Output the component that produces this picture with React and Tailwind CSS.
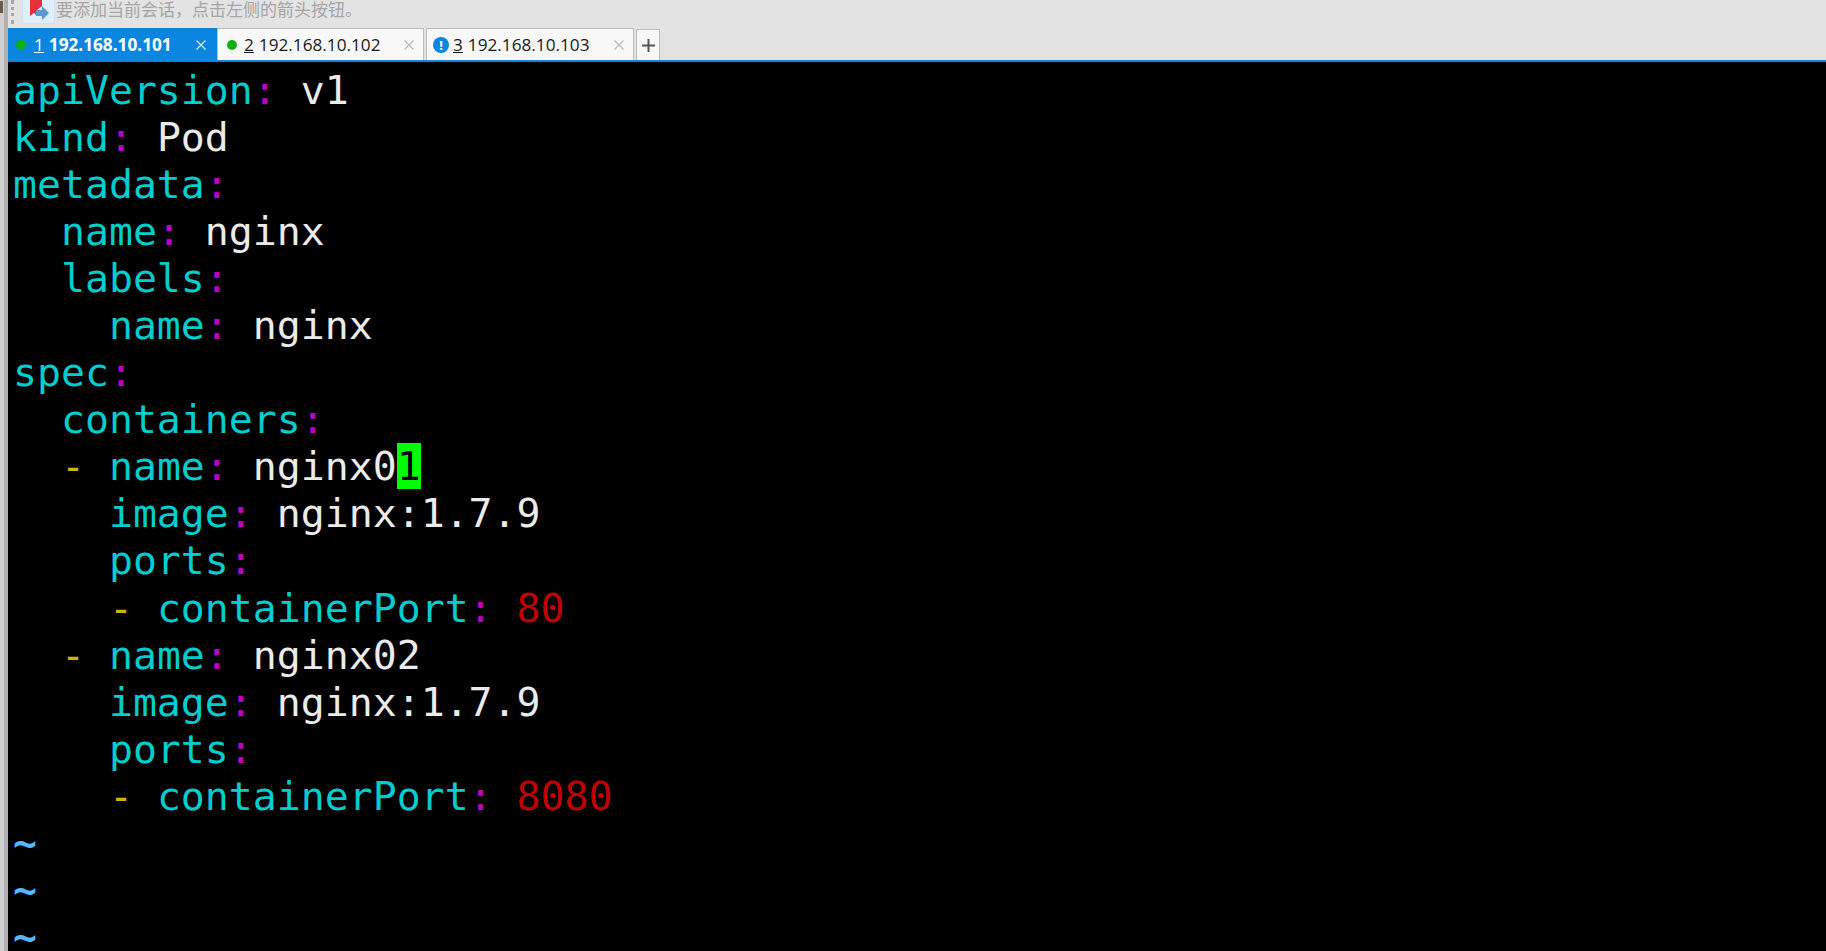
import React from 'react'

const c = 'text-[#00cdcd]'
const m = 'text-[#c000c0]'
const w = 'text-[#ebebeb]'
const y = 'text-[#cdb400]'
const r = 'text-[#c00000]'
const t = 'text-[#55b8ff] font-bold'

const lines = [
    [['apiVersion', c], [':', m], [' v1', w]],
    [['kind', c], [':', m], [' Pod', w]],
    [['metadata', c], [':', m]],
    [['  name', c], [':', m], [' nginx', w]],
    [['  labels', c], [':', m]],
    [['    name', c], [':', m], [' nginx', w]],
    [['spec', c], [':', m]],
    [['  containers', c], [':', m]],
    [['  ', c], ['-', y], [' name', c], [':', m], [' nginx0', w], ['1', 'cursor']],
    [['    image', c], [':', m], [' nginx:1.7.9', w]],
    [['    ports', c], [':', m]],
    [['    ', c], ['-', y], [' containerPort', c], [':', m], [' ', w], ['80', r]],
    [['  ', c], ['-', y], [' name', c], [':', m], [' nginx02', w]],
    [['    image', c], [':', m], [' nginx:1.7.9', w]],
    [['    ports', c], [':', m]],
    [['    ', c], ['-', y], [' containerPort', c], [':', m], [' ', w], ['8080', r]],
    [['~', t]],
    [['~', t]],
    [['~', t]],
]

const CloseIcon = ({ color }) => (
    <svg width="10" height="10" viewBox="0 0 10 10" className="ml-auto" stroke={color} strokeWidth="1.3">
        <path d="M0.5 0.5l9 9M9.5 0.5l-9 9" />
    </svg>
)

const Tab = ({ num, ip, active, warn, box }) => (
    <div
        className={
            active
                ? 'flex items-center w-[209px] h-full pl-[7px] pr-[11px] pt-[1px] bg-[#0a86e0] text-white font-bold'
                : `flex items-center ${box} h-full pr-[9px] pt-[1px] mr-[2px] bg-[#f8f8f8] text-[#1a1a1a] border border-b-0 border-[#bdbdbd]`
        }
    >
        {warn ? (
            <span className="flex items-center justify-center w-[16px] h-[16px] mr-[4px] rounded-full bg-[#0a86e0] text-white text-[13px] font-bold leading-none">!</span>
        ) : (
            <span className={active ? 'w-[10px] h-[10px] ml-[1px] mr-[8px] rounded-full bg-[#10b010]' : 'w-[10px] h-[10px] ml-[1px] mr-[7px] rounded-full bg-[#10b010]'} />
        )}
        <span className="underline mr-[5px] font-normal">{num}</span>
        <span>{ip}</span>
        <CloseIcon color={active ? '#cfe6f8' : '#bcbcbc'} />
    </div>
)

export default function App() {
    return (
        <div className="flex w-[1826px] h-[951px] overflow-hidden bg-[#e3e3e3]">
            <div className="flex flex-col w-[4px] h-full shrink-0 bg-[#cfcfcf]">
                <div className="w-[3px] h-[12px] mt-[1px] bg-[#6b5a48]" />
            </div>
            <div className="w-[4px] h-full shrink-0 bg-[#b0b0b0]" />
            <div className="flex flex-col flex-1 min-w-0">
                <div className="flex items-start h-[28px] shrink-0 overflow-hidden">
                    <div className="w-[3px] h-[24px] ml-[3px] mr-[8px] border-l-[3px] border-dotted border-[#a8a8a8]" />
                    <div className="flex items-center justify-center w-[33px] h-[24px] rounded-b-[3px] bg-[#deeefc] border border-t-0 border-[#cce2f6]">
                        <svg width="22" height="22" viewBox="0 0 22 22" className="-mt-[2px]">
                            <path d="M2 0h12v6l-5 4v6l-3-3-4 3z" fill="#e8303a" />
                            <path d="M8 10h6V6l7 7-7 7v-4H8z" fill="#5b97d5" />
                        </svg>
                    </div>
                    <span className="ml-[1px] -mt-[3px] text-[17px] leading-[24px] text-[#a6a6a6] font-['Noto_Sans_CJK_SC',sans-serif]">{'要添加当前会话\uFF0C点击左侧的箭头按钮。'}</span>
                </div>
                <div className="flex items-end h-[32px] shrink-0 text-[17.2px] font-['Open_Sans',sans-serif]">
                    <Tab num="1" ip="192.168.10.101" active />
                    <Tab num="2" ip="192.168.10.102" box="w-[207px] pl-[8px]" />
                    <Tab num="3" ip="192.168.10.103" warn box="w-[208px] pl-[6px]" />
                    <div className="flex items-center justify-center w-[24px] h-[31px] bg-[#f8f8f8] border border-b-0 border-[#bdbdbd]">
                        <svg width="13" height="13" viewBox="0 0 13 13" stroke="#555555" strokeWidth="2">
                            <path d="M0 6.5h13M6.5 0v13" />
                        </svg>
                    </div>
                </div>
                <div className="h-[2px] shrink-0 bg-[#0a86e0]" />
                <div className="flex-1 pl-[5px] pt-[4.5px] bg-black font-['DejaVu_Sans_Mono',monospace] text-[39.85px] leading-[47.1px] whitespace-pre">
                    {lines.map((line, i) => (
                        <div key={i} className="h-[47.1px]">
                            {line.map(([text, color], j) =>
                                color === 'cursor' ? (
                                    <span key={j} className="bg-[#00ff00] text-black">{text}</span>
                                ) : (
                                    <span key={j} className={color}>{text}</span>
                                )
                            )}
                        </div>
                    ))}
                </div>
            </div>
        </div>
    )
}
